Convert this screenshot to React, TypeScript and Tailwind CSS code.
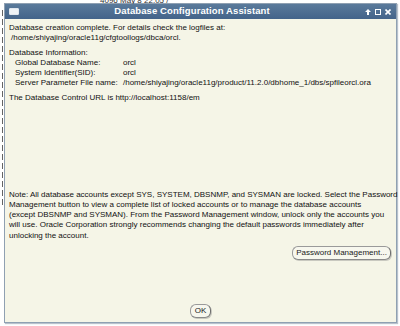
import React from "react";

const font = { fontFamily: '"Liberation Sans", Arial, sans-serif' };

function Row({ label, value }: { label: string; value: string }) {
  return (
    <div className="flex h-[10px] items-center pl-[6px]">
      <span className="w-[108px] shrink-0">{label}</span>
      <span className="whitespace-nowrap">{value}</span>
    </div>
  );
}

function PillButton({ children, className }: { children: React.ReactNode; className?: string }) {
  return (
    <button
      className={
        "h-[14px] rounded-[6px] border border-[#9a9a9a] border-r-[#6f6f6f] border-b-[#8a8a8a] bg-[#f7f7ee] text-[8px] leading-none text-[#1a1a1a] shadow-[1px_1px_0_#c9c9c0] " +
        (className ?? "")
      }
    >
      {children}
    </button>
  );
}

const note = [
  "Note: All database accounts except SYS, SYSTEM, DBSNMP, and SYSMAN are locked. Select the Password",
  "Management button to view a complete list of locked accounts or to manage the database accounts",
  "(except DBSNMP and SYSMAN). From the Password Management window, unlock only the accounts you",
  "will use. Oracle Corporation strongly recommends changing the default passwords immediately after",
  "unlocking the account.",
];

export default function App() {
  return (
    <div className="relative h-[326px] w-[400px] overflow-hidden bg-white" style={font}>
      {/* bits of the terminal behind the dialog */}
      <div className="absolute left-[100px] top-[-5px] text-[8px] text-[#333]">4096 May  8 22:05 /</div>
      <div className="absolute left-0 top-[10px] flex w-[4px] flex-col gap-[3px]">
        {Array.from({ length: 22 }).map((_, i) => (
          <div key={i} className="h-[6px] w-[3px] border-r border-[#222] opacity-70" />
        ))}
      </div>

      <div className="ml-[4px] mt-[3px] flex h-[320px] w-[393px] flex-col border border-[#8fa0b2] bg-[#f5f5e7] shadow-[1px_1px_1px_#b8c2cc]">
        {/* title bar */}
        <div className="relative flex h-[15px] shrink-0 items-center bg-gradient-to-b from-[#5a7a9b] to-[#44648a]">
          <div className="ml-[4px] h-[7px] w-[10px] rounded-[1px] border border-[#dfe6ee] bg-[#eef2f6]" />
          <div className="flex-1 text-center text-[9.5px] font-bold tracking-[0.1px] text-white">
            Database Configuration Assistant
          </div>
          <div className="mr-[5px] flex items-center gap-[4px] text-white">
            <svg width="6" height="6" viewBox="0 0 6 6">
              <path d="M3 0 L6 3 L4 3 L4 6 L2 6 L2 3 L0 3 Z" fill="white" />
            </svg>
            <svg width="6" height="6" viewBox="0 0 6 6">
              <rect x="0.5" y="0.5" width="5" height="5" fill="none" stroke="white" strokeWidth="1" />
            </svg>
            <svg width="6" height="6" viewBox="0 0 6 6">
              <path d="M0.5 0.5 L5.5 5.5 M5.5 0.5 L0.5 5.5" stroke="white" strokeWidth="1.6" />
            </svg>
          </div>
        </div>

        {/* content */}
        <div className="flex flex-1 flex-col px-[4px] pt-[4px] text-[8px] leading-[10px] text-[#111]">
          <div>Database creation complete. For details check the logfiles at:</div>
          <div className="pl-[2px]">/home/shiyajing/oracle11g/cfgtoollogs/dbca/orcl.</div>

          <div className="mt-[5px]">Database Information:</div>
          <Row label="Global Database Name:" value="orcl" />
          <Row label="System Identifier(SID):" value="orcl" />
          <Row label="Server Parameter File name:" value="/home/shiyajing/oracle11g/product/11.2.0/dbhome_1/dbs/spfileorcl.ora" />

          <div className="mt-[5px]">The Database Control URL is http://localhost:1158/em</div>

          <div className="flex-1" />

          <div className="leading-[10.3px]">
            {note.map((l) => (
              <div key={l} className="whitespace-nowrap">
                {l}
              </div>
            ))}
          </div>

          <div className="mt-[5px] flex justify-end pr-[1px]">
            <PillButton className="w-[99px]">Password Management...</PillButton>
          </div>

          <div className="mb-[4px] mt-[44px] flex justify-center">
            <PillButton className="w-[21px]">OK</PillButton>
          </div>
        </div>
      </div>
    </div>
  );
}
